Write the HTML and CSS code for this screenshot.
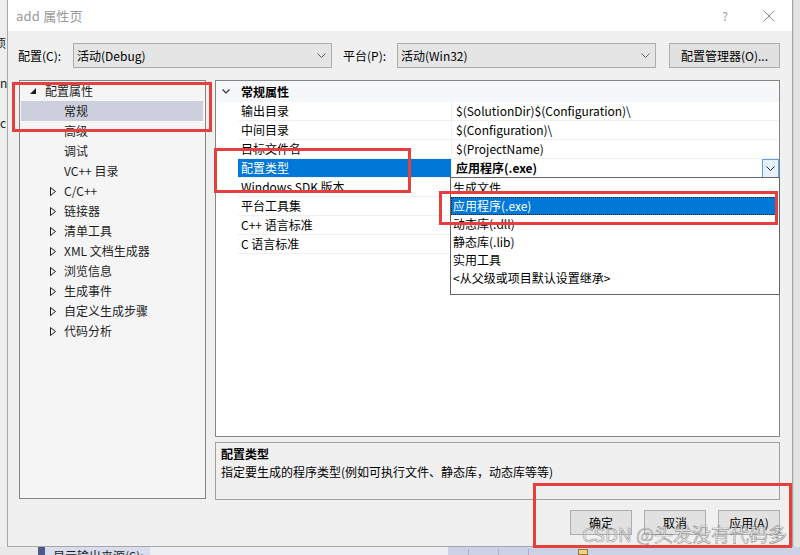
FILE: index.html
```html
<!DOCTYPE html>
<html lang="zh-CN">
<head>
<meta charset="utf-8">
<title>add 属性页</title>
<link rel="stylesheet" href="styles.css">
</head>
<body>
<div class="screen">
  <div class="top">
    <div class="bg-left"><span class="c1">项</span><span class="c2">n</span><span class="c3">c</span></div>
    <div class="dialog">
      <div class="titlebar">
        <span class="title">add 属性页</span>
        <span class="help">?</span>
        <span class="close"><svg width="12" height="12" viewBox="0 0 12 12"><path d="M0.5 0.5L11.5 11.5M11.5 0.5L0.5 11.5" stroke="#8c8c8c" stroke-width="1" fill="none"/></svg></span>
      </div>
      <div class="body">
        <div class="config-row">
          <span class="lbl lbl1">配置(C):</span>
          <div class="combo"><span>活动(Debug)</span><svg class="chev" width="9" height="5" viewBox="0 0 9 5"><path d="M0.5 0.5L4.5 4.5L8.5 0.5" stroke="#606060" fill="none"/></svg></div>
          <span class="lbl lbl2">平台(P):</span>
          <div class="combo"><span>活动(Win32)</span><svg class="chev" width="9" height="5" viewBox="0 0 9 5"><path d="M0.5 0.5L4.5 4.5L8.5 0.5" stroke="#606060" fill="none"/></svg></div>
          <div class="btn mgr">配置管理器(O)...</div>
        </div>
        <div class="main">
          <div class="tree">
            <div class="node root"><svg class="tri-open" width="6" height="6" viewBox="0 0 6 6"><path d="M6 0L6 6L0 6Z" fill="#1e1e1e"/></svg>配置属性</div>
            <div class="node leaf sel">常规</div>
            <div class="node leaf">高级</div>
            <div class="node leaf">调试</div>
            <div class="node leaf">VC++ 目录</div>
            <div class="node branch"><svg class="tri" width="6" height="9" viewBox="0 0 6 9"><path d="M0.5 0.5L5.5 4.5L0.5 8.5Z" fill="none" stroke="#1e1e1e"/></svg>C/C++</div>
            <div class="node branch"><svg class="tri" width="6" height="9" viewBox="0 0 6 9"><path d="M0.5 0.5L5.5 4.5L0.5 8.5Z" fill="none" stroke="#1e1e1e"/></svg>链接器</div>
            <div class="node branch"><svg class="tri" width="6" height="9" viewBox="0 0 6 9"><path d="M0.5 0.5L5.5 4.5L0.5 8.5Z" fill="none" stroke="#1e1e1e"/></svg>清单工具</div>
            <div class="node branch"><svg class="tri" width="6" height="9" viewBox="0 0 6 9"><path d="M0.5 0.5L5.5 4.5L0.5 8.5Z" fill="none" stroke="#1e1e1e"/></svg>XML 文档生成器</div>
            <div class="node branch"><svg class="tri" width="6" height="9" viewBox="0 0 6 9"><path d="M0.5 0.5L5.5 4.5L0.5 8.5Z" fill="none" stroke="#1e1e1e"/></svg>浏览信息</div>
            <div class="node branch"><svg class="tri" width="6" height="9" viewBox="0 0 6 9"><path d="M0.5 0.5L5.5 4.5L0.5 8.5Z" fill="none" stroke="#1e1e1e"/></svg>生成事件</div>
            <div class="node branch"><svg class="tri" width="6" height="9" viewBox="0 0 6 9"><path d="M0.5 0.5L5.5 4.5L0.5 8.5Z" fill="none" stroke="#1e1e1e"/></svg>自定义生成步骤</div>
            <div class="node branch"><svg class="tri" width="6" height="9" viewBox="0 0 6 9"><path d="M0.5 0.5L5.5 4.5L0.5 8.5Z" fill="none" stroke="#1e1e1e"/></svg>代码分析</div>
          </div>
          <div class="right">
            <div class="grid">
              <div class="ghead"><span class="gutter"><svg width="8" height="5" viewBox="0 0 8 5"><path d="M0.5 0.5L4 4L7.5 0.5" stroke="#333" stroke-width="1.2" fill="none"/></svg></span><span class="hname">常规属性</span></div>
              <div class="grow"><span class="gutter"></span><span class="name">输出目录</span><span class="val">$(SolutionDir)$(Configuration)\</span></div>
              <div class="grow"><span class="gutter"></span><span class="name">中间目录</span><span class="val">$(Configuration)\</span></div>
              <div class="grow"><span class="gutter"></span><span class="name">目标文件名</span><span class="val">$(ProjectName)</span></div>
              <div class="grow active"><span class="gutter"></span><span class="name">配置类型</span><span class="val"><b>应用程序(.exe)</b><span class="dd-btn"><svg width="9" height="5" viewBox="0 0 9 5"><path d="M0.5 0.5L4.5 4.5L8.5 0.5" stroke="#222" fill="none"/></svg></span></span></div>
              <div class="grow"><span class="gutter"></span><span class="name">Windows SDK 版本</span><span class="val"></span></div>
              <div class="grow"><span class="gutter"></span><span class="name">平台工具集</span><span class="val"></span></div>
              <div class="grow"><span class="gutter"></span><span class="name">C++ 语言标准</span><span class="val"></span></div>
              <div class="grow"><span class="gutter"></span><span class="name">C 语言标准</span><span class="val"></span></div>
              <div class="dropdown">
                <div class="opt">生成文件</div>
                <div class="opt chosen">应用程序(.exe)</div>
                <div class="opt">动态库(.dll)</div>
                <div class="opt">静态库(.lib)</div>
                <div class="opt">实用工具</div>
                <div class="opt">&lt;从父级或项目默认设置继承&gt;</div>
              </div>
            </div>
            <div class="desc">
              <div class="desc-title">配置类型</div>
              <div class="desc-text">指定要生成的程序类型(例如可执行文件、静态库，动态库等等)</div>
            </div>
          </div>
        </div>
        <div class="buttons">
          <div class="btn">确定</div>
          <div class="btn">取消</div>
          <div class="btn">应用(A)</div>
        </div>
      </div>
    </div>
    <div class="bg-right"></div>
  </div>
  <div class="bottom-strip">
    <span class="bs1"></span><span class="bs2"></span><span class="bs3">显示输出来源(S):</span><span class="bs4"></span><span class="bs5"><i></i><i></i><i></i><i class="yel"></i></span>
  </div>
  <div class="annot a1"></div>
  <div class="annot a2"></div>
  <div class="annot a3"></div>
  <div class="annot a4"></div>
  <div class="watermark">CSDN @头发没有代码多</div>
</div>
</body>
</html>
```

FILE: styles.css
```css
* { box-sizing: border-box; margin: 0; padding: 0; }
html, body { width: 800px; height: 555px; overflow: hidden; }
body {
  font-family: "Noto Sans CJK SC", "Noto Sans", sans-serif;
  font-size: 12px;
  color: #000;
  background: #ececec;
}
.screen { position: relative; width: 800px; height: 555px; overflow: hidden; }
.top { display: flex; height: 547px; }

.bg-left {
  width: 7px;
  background: #eeeeee;
  overflow: hidden;
  display: flex;
  flex-direction: column;
  font-size: 12px;
  line-height: 14px;
  color: #222;
}
.bg-left .c1 { margin-top: 36px; margin-left: -6px; }
.bg-left .c2 { margin-top: 26px; margin-left: 0; }
.bg-left .c3 { margin-top: 26px; margin-left: 0; }

.dialog {
  width: 786px;
  background: #f0f0f0;
  border: 1px solid #a8a8a8;
  border-top: none;
  display: flex;
  flex-direction: column;
}
.bg-right { flex: 1; background: #e4e4e4; border-left: 1px solid #d0d0d0; }

.titlebar {
  height: 31px;
  background: #fff;
  display: flex;
  align-items: center;
  padding-left: 8px;
}
.title { font-size: 13px; color: #999; letter-spacing: 0.2px; }
.help { margin-left: auto; width: 20px; text-align: center; color: #9a9a9a; font-size: 12px; margin-right: 11px; }
.close { width: 46px; height: 31px; display: flex; align-items: center; justify-content: center; }

.body { padding: 12px 12px 12px 11px; display: flex; flex-direction: column; }

.config-row { display: flex; align-items: center; height: 25px; }
.lbl { line-height: 25px; }
.lbl1 { width: 55px; margin-left: -1px; }
.lbl2 { width: 54px; margin-left: 11px; }
.combo {
  width: 259px;
  height: 25px;
  background: #e5e5e5;
  border: 1px solid #acacac;
  display: flex;
  align-items: center;
  padding-left: 3px;
  padding-right: 5px;
}
.combo span { flex: 1; }
.btn {
  height: 25px;
  background: #e1e1e1;
  border: 1px solid #adadad;
  display: flex;
  align-items: center;
  justify-content: center;
}
.mgr { width: 111px; margin-left: auto; }

.main { display: flex; gap: 9px; margin-top: 12px; height: 420px; }
.tree {
  width: 187px;
  height: 419px;
  background: #f5f5f5;
  border: 1px solid #858585;
  padding-top: 0;
}
.node { height: 20px; display: flex; align-items: center; line-height: 20px; white-space: nowrap; color: #1e1e1e; }
.root { padding-left: 10px; }
.root svg { margin-right: 9px; }
.leaf { padding-left: 44px; }
.branch { padding-left: 30px; }
.branch svg { margin-right: 8px; }
.sel { background: #cdd0dc; margin: 0 2px 0 1px; padding-left: 43px; }

.right { flex: 1; display: flex; flex-direction: column; gap: 5px; }
.grid {
  position: relative;
  height: 357px;
  background: #fff;
  border: 1px solid #858585;
}
.ghead { height: 21px; display: flex; align-items: center; background: #f6f7f9; }
.gutter { width: 22px; flex: none; display: flex; align-items: center; justify-content: center; height: 100%; padding-right: 2px; }
.hname { font-weight: bold; padding-left: 3px; }
.grow { height: 19px; display: flex; align-items: stretch; line-height: 18px; }
.grow .name { width: 213px; padding-left: 3px; border-bottom: 1px solid #f0f0f0; white-space: nowrap; }
.grow .val { flex: 1; padding-left: 4px; border-left: 1px solid #f0f0f0; border-bottom: 1px solid #f0f0f0; display: flex; align-items: center; white-space: nowrap; }
.grow .val b { flex: 1; }
.active .name { background: #0078d7; color: #fff; }
.dd-btn {
  width: 17px;
  height: 19px;
  border: 1px solid #5aa0df;
  background: #e5f1fb;
  display: flex;
  align-items: center;
  justify-content: center;
  margin-right: 0;
}

.dropdown {
  position: absolute;
  left: 234px;
  top: 96px;
  width: 330px;
  height: 118px;
  background: #fff;
  border: 1px solid #646464;
  padding-top: 1px;
}
.opt { height: 18px; line-height: 18px; padding-left: 2px; white-space: nowrap; }
.chosen { background: #0078d7; color: #fff; outline: 1px dotted #222; outline-offset: -1px; margin-right: 1px; }

.desc {
  height: 58px;
  border: 1px solid #a0a0a0;
  background: #f0f0f0;
  padding: 2px 5px;
  line-height: 18px;
}
.desc-title { font-weight: bold; }

.buttons { display: flex; justify-content: flex-end; gap: 12px; margin-top: 10px; }
.buttons .btn { width: 62px; }

.bottom-strip { display: flex; height: 8px; overflow: hidden; }
.bs1 { width: 38px; background: #e9e9e9; }
.bs2 { width: 7px; background: #4d5988; }
.bs3 { width: 105px; background: #d9dded; font-size: 12px; line-height: 14px; padding-left: 8px; padding-top: 2px; white-space: nowrap; overflow: hidden; color: #1e1e1e; }
.bs4 { width: 298px; background: #eeeff3; }
.bs5 { flex: 1; background: #ccd2e6; display: flex; gap: 20px; padding-left: 20px; padding-top: 2px; }
.bs5 i { display: block; width: 10px; height: 6px; border-left: 1px solid #a9b0c8; }
.bs5 i.yel { width: 10px; background: #f2d27a; border: 1px solid #9a7a30; margin-left: 20px; }

.annot { position: absolute; border: 3px solid #e6403e; }
.a1 { left: 12px; top: 82px; width: 200px; height: 50px; }
.a2 { left: 214px; top: 148px; width: 197px; height: 45px; }
.a3 { left: 439px; top: 191px; width: 339px; height: 34px; }
.a4 { left: 533px; top: 483px; width: 259px; height: 65px; }

.watermark {
  position: absolute;
  left: 582px;
  top: 521px;
  font-size: 19px;
  line-height: 25px;
  white-space: nowrap;
  color: rgba(255, 255, 255, 0.55);
  -webkit-text-stroke: 0.7px rgba(95, 95, 95, 0.6);
}
```
